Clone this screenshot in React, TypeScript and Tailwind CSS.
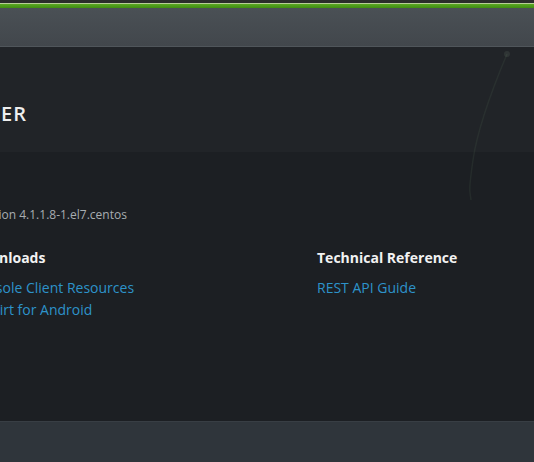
import React from 'react';

const downloads = ['Console Client Resources', 'moVirt for Android'];
const reference = ['REST API Guide'];

const App: React.FC = () => {
  return (
    <div className="relative w-[534px] h-[462px] overflow-hidden flex flex-col bg-[#1c1f23] font-['Open_Sans',sans-serif]">
      {/* top green strip */}
      <div className="h-[3px] bg-[#2a2d2b]" />
      <div className="h-px bg-[#b7cf96]" />
      <div className="h-[4px] bg-gradient-to-b from-[#5aa822] to-[#3f8c12]" />

      {/* grey header bar */}
      <div className="h-[39px] bg-gradient-to-b from-[#4a5055] to-[#42474c] border-b border-[#50565b]" />

      {/* brand banner */}
      <div className="h-[105px] bg-[#212428] flex items-center">
        <div className="w-[27px] flex justify-end pt-[29px]">
          <span className="whitespace-nowrap text-[20px] font-semibold tracking-[1px] text-[#eeeeee]">
            OPEN VIRTUALIZATION MANAGER
          </span>
        </div>
      </div>

      {/* welcome content */}
      <div className="flex-1 bg-[#1c1f23] pt-[54px]">
        <p className="ml-[-26px] text-[12px] leading-[17px] text-[#a8adb1]">Version 4.1.1.8-1.el7.centos</p>
        <div className="ml-[-30px] grid grid-cols-[347px_1fr] mt-[25px]">
          <div>
            <h3 className="ml-[-2px] text-[14px] leading-[20px] font-bold text-[#f2f2f2]">Downloads</h3>
            <ul className="mt-[9px]">
              {downloads.map((d) => (
                <li key={d} className="text-[14px] leading-[22px] text-[#2d93ca]">{d}</li>
              ))}
            </ul>
          </div>
          <div>
            <h3 className="text-[14px] leading-[20px] font-bold text-[#f2f2f2]">Technical Reference</h3>
            <ul className="mt-[9px]">
              {reference.map((d) => (
                <li key={d} className="text-[14px] leading-[22px] text-[#2d93ca]">{d}</li>
              ))}
            </ul>
          </div>
        </div>
      </div>

      {/* footer */}
      <div className="h-[41px] bg-[#2f353b] border-t border-[#383e44]" />

      {/* faint background swirl */}
      <svg className="absolute left-0 top-0 pointer-events-none" width="534" height="462" viewBox="0 0 534 462">
        <path d="M507 54 C 494 85, 478 125, 473 160 S 470 190, 471 200" stroke="#5f7a5c" strokeOpacity="0.14" strokeWidth="1.5" fill="none" />
        <circle cx="507" cy="54" r="3" fill="#8a9a88" fillOpacity="0.14" />
      </svg>
    </div>
  );
};

export default App;
